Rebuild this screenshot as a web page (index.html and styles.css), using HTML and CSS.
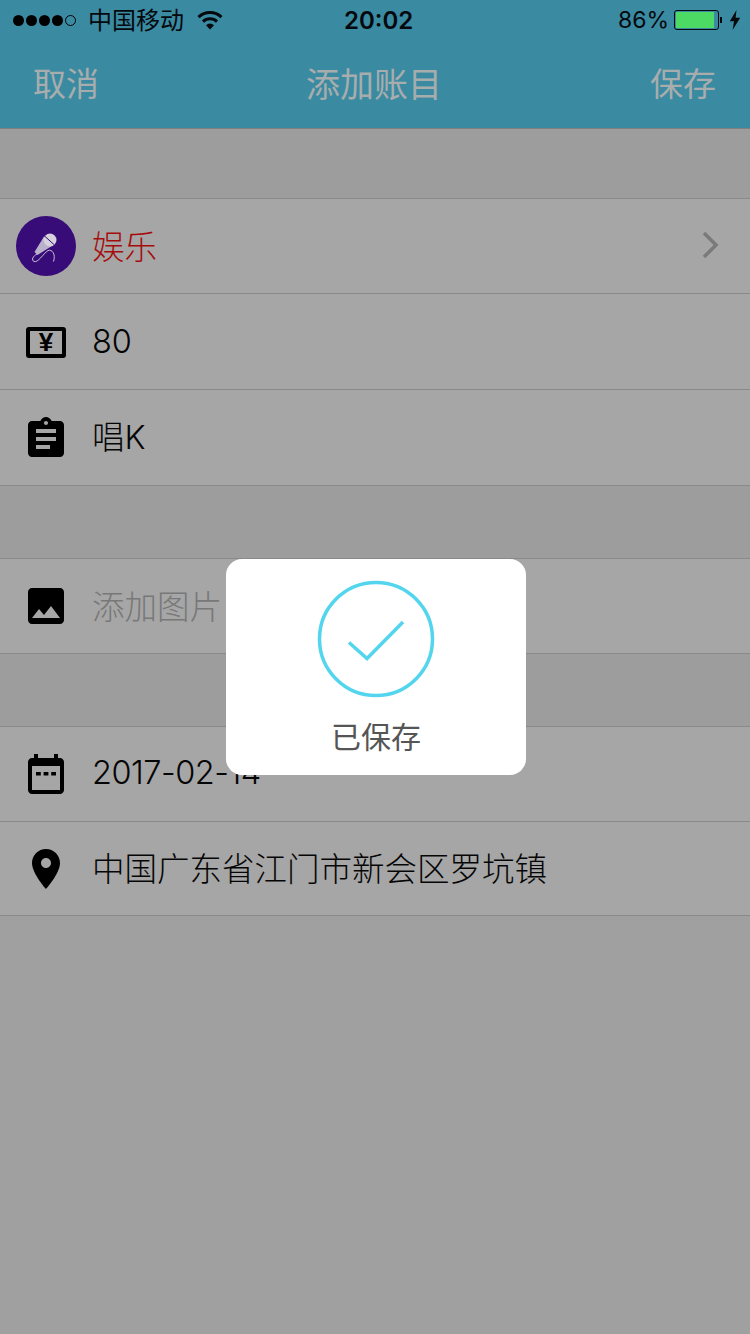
FILE: index.html
```html
<!DOCTYPE html>
<html lang="zh-CN">
<head>
    <meta charset="UTF-8">
    <meta name="viewport" content="width=device-width, initial-scale=1.0">
    <title>添加账目</title>
    <link rel="stylesheet" href="styles.css">
</head>
<body>
    <header class="top">
        <div class="status">
            <div class="status-left">
                <span class="signal"><i></i><i></i><i></i><i></i><i class="off"></i></span>
                <span class="carrier">中国移动</span>
                <svg class="wifi" viewBox="0 0 26 20" width="26" height="20">
                    <path d="M1.500 7.200a16.500 16.500 0 0 1 23 0" fill="none" stroke="#05080c" stroke-width="3"/>
                    <path d="M6 11.600a10 10 0 0 1 14 0" fill="none" stroke="#05080c" stroke-width="3"/>
                    <path d="M9 15.200a5.600 5.600 0 0 1 8 0L13 19.400z" fill="#05080c"/>
                </svg>
            </div>
            <div class="status-time">20:02</div>
            <div class="status-right">
                <span class="percent">86%</span>
                <span class="battery"><span class="battery-fill"></span></span>
                <span class="battery-tip"></span>
                <svg class="bolt" viewBox="0 0 12 20" width="12" height="20">
                    <path d="M7.500 0L0.800 11.200H5L3.600 20L11.200 7.800H6.600z" fill="#05080c"/>
                </svg>
            </div>
        </div>
        <nav class="nav">
            <span class="nav-btn">取消</span>
            <span class="nav-title">添加账目</span>
            <span class="nav-btn">保存</span>
        </nav>
    </header>

    <div class="gap gap-first"></div>
    <section class="group">
        <div class="row">
            <span class="slot">
                <svg viewBox="0 0 60 60" width="60" height="60">
                    <circle cx="30" cy="30" r="30" fill="#370b78"/>
                    <path d="M28 20.500L18.500 36L21.500 39L37.500 29z" fill="#b9b0c9"/>
                    <circle cx="34" cy="24" r="6.500" fill="#d6d1dd"/>
                    <path d="M28.500 20L38.500 29" stroke="#370b78" stroke-width="1"/>
                    <path d="M21 38C17 40 15 44 18 45.500C22 47 27 38 32 34.500C36 33 40 38 37.500 45.500" fill="none" stroke="#c9c2d6" stroke-width="1"/>
                </svg>
            </span>
            <span class="text text-red">娱乐</span>
            <svg class="chevron" viewBox="0 0 20 28" width="20" height="28">
                <path d="M3 2L15 14L3 26" fill="none" stroke="#7a7a7a" stroke-width="3.500"/>
            </svg>
        </div>
        <div class="row row-tall">
            <span class="slot"><span class="yen">¥</span></span>
            <span class="text text-num">80</span>
        </div>
        <div class="row row-tall">
            <span class="slot slot-low">
                <svg viewBox="0 0 24 24" width="48" height="48"><path d="M19 3h-4.180C14.400 1.840 13.300 1 12 1c-1.300 0-2.400.84-2.820 2H5c-1.100 0-2 .9-2 2v14c0 1.100.9 2 2 2h14c1.100 0 2-.9 2-2V5c0-1.100-.9-2-2-2zm-7 0c.55 0 1 .45 1 1s-.45 1-1 1-1-.45-1-1 .45-1 1-1zm2 14H7v-2h7v2zm3-4H7v-2h10v2zm0-4H7V7h10v2z"/></svg>
            </span>
            <span class="text text-high">唱K</span>
        </div>
    </section>

    <div class="gap gap-mid"></div>
    <section class="group">
        <div class="row">
            <span class="slot">
                <svg viewBox="0 0 24 24" width="48" height="48"><path d="M21 19V5c0-1.100-.9-2-2-2H5c-1.100 0-2 .9-2 2v14c0 1.100.9 2 2 2h14c1.100 0 2-.9 2-2zM8.500 13.500l2.500 3.010L14.500 12l4.500 6H5l3.500-4.500z"/></svg>
            </span>
            <span class="text text-muted">添加图片</span>
        </div>
    </section>

    <div class="gap gap-mid"></div>
    <section class="group">
        <div class="row">
            <span class="slot">
                <svg viewBox="0 0 24 24" width="48" height="48"><path fill-rule="evenodd" d="M19 4h-1V2h-2v2H8V2H6v2H5C3.900 4 3 4.900 3 6v14c0 1.100.9 2 2 2h14c1.100 0 2-.9 2-2V6c0-1.100-.9-2-2-2zm0 16H5V8h14v12zM7 11h2.400v1.800H7zM10.800 11h2.400v1.800h-2.400zM14.600 11H17v1.800h-2.400z"/></svg>
            </span>
            <span class="text text-date">2017-02-14</span>
        </div>
        <div class="row row-short">
            <span class="slot">
                <svg viewBox="0 0 24 24" width="48" height="48"><path d="M12 2C8.130 2 5 5.130 5 9c0 5.250 7 13 7 13s7-7.750 7-13c0-3.870-3.130-7-7-7zm0 9.500c-1.380 0-2.500-1.120-2.500-2.500s1.120-2.500 2.500-2.500 2.500 1.120 2.500 2.500-1.120 2.500-2.500 2.500z"/></svg>
            </span>
            <span class="text">中国广东省江门市新会区罗坑镇</span>
        </div>
    </section>

    <div class="toast">
        <svg class="toast-icon" viewBox="0 0 120 120" width="120" height="120">
            <circle cx="60" cy="60" r="56.500" fill="none" stroke="#53d5ee" stroke-width="3.500"/>
            <path d="M33 63.500L51 79.500L87 43" fill="none" stroke="#53d5ee" stroke-width="3.500"/>
        </svg>
        <div class="toast-text">已保存</div>
    </div>
</body>
</html>
```

FILE: styles.css
```css
html, body {
    margin: 0;
    padding: 0;
}
body {
    position: relative;
    width: 750px;
    height: 1334px;
    overflow: hidden;
    background-color: #a0a0a0;
    color: #050505;
    font-family: Inter, "Noto Sans CJK SC", sans-serif;
    font-weight: 300;
}

/* top bar */
.top {
    height: 128px;
    background-color: #3a8aa2;
    border-bottom: 1px solid #808080;
}
.status {
    display: flex;
    justify-content: space-between;
    align-items: center;
    height: 40px;
    padding: 0 9px 0 13px;
    color: #05080c;
    position: relative;
}
.status-left, .status-right {
    display: flex;
    align-items: center;
}
.signal {
    display: flex;
    gap: 2px;
    margin-right: 12px;
}
.signal i {
    width: 11px;
    height: 11px;
    border-radius: 50%;
    background-color: #000;
    box-sizing: border-box;
}
.signal i.off {
    background: none;
    border: 1px solid #000;
}
.carrier {
    font-size: 24px;
    font-weight: 400;
    margin-right: 13px;
    padding-bottom: 4px;
}
.status-time {
    position: absolute;
    left: 344px;
    font-size: 24px;
    font-weight: 600;
}
.percent {
    font-size: 23px;
    font-weight: 400;
    margin-right: 5px;
}
.battery {
    width: 45px;
    height: 20px;
    border: 1px solid #05080c;
    border-radius: 3px;
    padding: 1px;
    box-sizing: border-box;
    display: block;
    margin-right: 1px;
}
.battery-fill {
    display: block;
    width: 38px;
    height: 100%;
    background-color: #4cd964;
}
.battery-tip {
    width: 2px;
    height: 6px;
    background-color: #05080c;
    margin-right: 7px;
}
.nav {
    display: flex;
    justify-content: space-between;
    align-items: center;
    height: 84px;
    padding: 0 34px 4px 33px;
    color: #a7adad;
    font-size: 34px;
    font-weight: 400;
}
.nav-btn {
    font-size: 33px;
}
.nav-title {
    margin-left: -1px;
}

/* form rows */
.gap {
    background-color: #9d9d9d;
}
.gap-first {
    height: 69px;
}
.gap-mid {
    height: 72px;
}
.group {
    background-color: #a6a6a6;
    border-top: 1px solid #8a8a8a;
    border-bottom: 1px solid #8a8a8a;
}
.row {
    display: flex;
    align-items: center;
    height: 94px;
    padding-left: 16px;
    border-top: 1px solid #8a8a8a;
}
.row:first-child {
    border-top: none;
}
.row-tall {
    height: 95px;
}
.row-short {
    height: 93px;
}
.slot {
    display: flex;
    justify-content: center;
    align-items: center;
    width: 60px;
    height: 60px;
    margin-right: 16px;
}
.slot-low {
    padding-top: 2px;
    box-sizing: border-box;
}
.text {
    font-size: 32.500px;
    padding-bottom: 4px;
}
.text-num {
    padding-bottom: 1px;
}
.text-high {
    padding-bottom: 6px;
}
.text-date {
    letter-spacing: -0.500px;
}
.text-red {
    color: #a50d0d;
}
.text-muted {
    color: #787878;
}
.chevron {
    margin-left: auto;
    margin-right: 29px;
    margin-bottom: 2px;
}
.yen {
    width: 40px;
    height: 31px;
    margin-top: 2px;
    border: 4px solid #000;
    border-radius: 3px;
    box-sizing: border-box;
    display: flex;
    justify-content: center;
    align-items: center;
    font-family: "Liberation Sans", sans-serif;
    font-size: 26px;
    font-weight: 700;
    color: #000;
}

/* saved toast */
.toast {
    position: absolute;
    left: 226px;
    top: 559px;
    width: 300px;
    height: 216px;
    background-color: #fff;
    border-radius: 16px;
    text-align: center;
}
.toast-icon {
    display: block;
    margin: 20px auto 0;
}
.toast-text {
    margin-top: 16px;
    font-size: 30px;
    font-weight: 400;
    line-height: 44px;
    color: #555;
}
```
